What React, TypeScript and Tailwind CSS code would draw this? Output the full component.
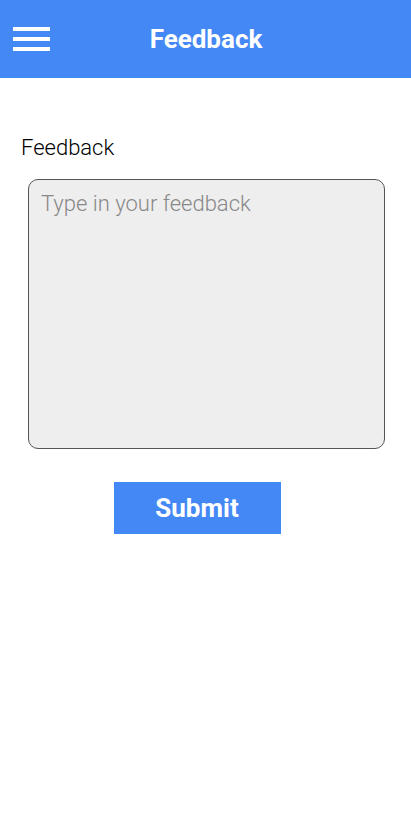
export default function App() {
  return (
    <div className="min-h-screen bg-white font-['Roboto',sans-serif]">
      {/* HEADER */}
      <header className="h-[78px] bg-[#4488f6] flex items-center relative">
        <button className="ml-[13px] flex flex-col gap-[6px]">
          <span className="block w-[37px] h-[4px] bg-white" />
          <span className="block w-[37px] h-[4px] bg-white" />
          <span className="block w-[37px] h-[4px] bg-white" />
        </button>
        <h1 className="absolute left-0 right-0 text-center text-white font-bold text-[26px] leading-none pointer-events-none pl-[1px]">
          Feedback
        </h1>
      </header>

      <main className="pt-[56px] px-[22px]">
        <label className="block text-[22px] font-light leading-[28px] text-black -ml-[1px]">Feedback</label>
        <div className="mt-[17px] pl-[6px] pr-[4px]">
          <textarea
            className="w-full h-[270px] bg-[#eeeeee] border border-[#555] rounded-[10px] px-[12px] pt-[10px] pb-[8px] text-[22px] font-light leading-[28px] resize-none outline-none placeholder:text-[#888]"
            placeholder="Type in your feedback"
          />
        </div>
        <div className="mt-[26px] flex justify-center pr-[17px]">
          <button className="w-[167px] h-[52px] bg-[#4488f6] text-white font-bold text-[26px]">Submit</button>
        </div>
      </main>
    </div>
  )
}
